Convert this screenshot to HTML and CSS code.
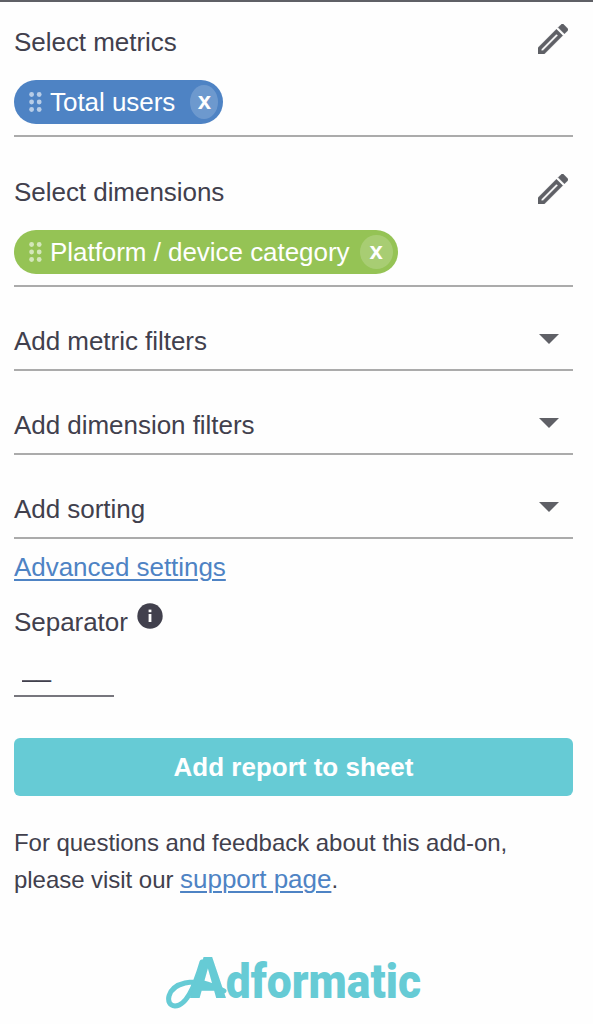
FILE: index.html
```
<!DOCTYPE html>
<html lang="en">
<head>
    <meta charset="utf-8">
    <title>Adformatic</title>
    <link rel="stylesheet" href="styles.css">
</head>
<body>
    <div class="sidebar">
        <div class="picker">
            <div class="picker-heading">
                <span>Select metrics</span>
                <svg class="edit-icon" viewBox="3 3 18 18">
                    <path d="M14.06 9.02l.92.92L5.92 19H5v-.92l9.06-9.06M17.66 3c-.25 0-.51.1-.7.29l-1.83 1.83 3.75 3.75 1.83-1.83c.39-.39.39-1.02 0-1.41l-2.34-2.34c-.2-.2-.45-.29-.71-.29zm-3.6 3.19L3 17.25V21h3.75L17.81 9.94l-3.75-3.75z"/>
                </svg>
            </div>
            <div class="chip chip-metric">
                <svg class="grip" viewBox="0 0 13 20">
                    <circle cx="2.6" cy="2.5" r="2.4"/><circle cx="10.2" cy="2.5" r="2.4"/>
                    <circle cx="2.6" cy="10" r="2.4"/><circle cx="10.2" cy="10" r="2.4"/>
                    <circle cx="2.6" cy="17.5" r="2.4"/><circle cx="10.2" cy="17.5" r="2.4"/>
                </svg>
                <span class="chip-label">Total users</span>
                <span class="chip-close">x</span>
            </div>
        </div>

        <div class="picker">
            <div class="picker-heading">
                <span>Select dimensions</span>
                <svg class="edit-icon" viewBox="3 3 18 18">
                    <path d="M14.06 9.02l.92.92L5.92 19H5v-.92l9.06-9.06M17.66 3c-.25 0-.51.1-.7.29l-1.83 1.83 3.75 3.75 1.83-1.83c.39-.39.39-1.02 0-1.41l-2.34-2.34c-.2-.2-.45-.29-.71-.29zm-3.6 3.19L3 17.25V21h3.75L17.81 9.94l-3.75-3.75z"/>
                </svg>
            </div>
            <div class="chip chip-dimension">
                <svg class="grip" viewBox="0 0 13 20">
                    <circle cx="2.6" cy="2.5" r="2.4"/><circle cx="10.2" cy="2.5" r="2.4"/>
                    <circle cx="2.6" cy="10" r="2.4"/><circle cx="10.2" cy="10" r="2.4"/>
                    <circle cx="2.6" cy="17.5" r="2.4"/><circle cx="10.2" cy="17.5" r="2.4"/>
                </svg>
                <span class="chip-label">Platform / device category</span>
                <span class="chip-close">x</span>
            </div>
        </div>

        <div class="dropdown"><span>Add metric filters</span><span class="arrow"></span></div>
        <div class="dropdown"><span>Add dimension filters</span><span class="arrow"></span></div>
        <div class="dropdown"><span>Add sorting</span><span class="arrow"></span></div>

        <a class="link advanced" href="#">Advanced settings</a>

        <div class="separator">
            <label for="separator">Separator</label>
            <svg class="info-icon" viewBox="0 0 26 26">
                <circle class="info-disc" cx="13" cy="13" r="12.7"/>
                <rect x="11.6" y="6.6" width="2.8" height="2.6"/>
                <rect x="11.6" y="11" width="2.8" height="8"/>
            </svg>
        </div>
        <input class="separator-input" id="separator" type="text" value="__">

        <button class="submit">Add report to sheet</button>

        <p class="support">For questions and feedback about this add-on,<br>please visit our <a class="link support-link" href="#">support page</a>.</p>

        <svg class="logo" viewBox="0 0 256 70">
            <!-- swash leading into the wordmark -->
            <path class="swash" d="M36 14C31 31 22 58 9 58C-2 57 1 39 19 35C32 32 42 35 58 43"/>
            <text class="logo-text" x="24" y="50" textLength="231" lengthAdjust="spacingAndGlyphs"><tspan class="logo-initial">A</tspan>dformatic</text>
        </svg>
    </div>
</body>
</html>
```
FILE: styles.css
```
* {
    box-sizing: border-box;
}

body {
    margin: 0;
    background-color: #fefefe;
    color: #41404d;
    font-family: "Liberation Sans", Arial, sans-serif;
    font-size: 26px;
    letter-spacing: -0.04px;
    line-height: 30px;
}

.sidebar {
    display: flex;
    flex-direction: column;
    align-items: flex-start;
    height: 1024px;
    padding: 0 20px 0 14px;
    border-top: 2px solid #5f6066;
}

.picker {
    width: 100%;
    height: 150px;
    padding-top: 40px;
    border-bottom: 2px solid #ababab;
}

.picker:first-child {
    height: 135px;
    padding-top: 25px;
}

.picker-heading {
    display: flex;
    justify-content: space-between;
    height: 30px;
    padding-right: 5px;
}

.edit-icon {
    width: 30px;
    height: 30px;
    margin-top: -3px;
    fill: #5f6066;
    stroke: #5f6066;
    stroke-width: 0.3;
}

.chip {
    display: inline-flex;
    align-items: center;
    height: 44px;
    margin-top: 23px;
    padding: 0 5px 0 15px;
    border-radius: 22px;
    color: white;
}

.chip-metric {
    background-color: #4e83c4;
}

.chip-dimension {
    background-color: #95c355;
}

.grip {
    width: 13px;
    height: 20px;
    margin-right: 8px;
    fill: rgba(255, 255, 255, 0.6);
}

.chip-close {
    width: 28px;
    height: 34px;
    margin-left: 15px;
    border-radius: 50%;
    background-color: rgba(255, 255, 255, 0.18);
    font-size: 24px;
    font-weight: bold;
    line-height: 31px;
    text-align: center;
}

.chip-dimension .chip-close {
    width: 33px;
    margin-left: 10px;
}

.dropdown {
    display: flex;
    justify-content: space-between;
    width: 100%;
    height: 84px;
    padding: 39px 14px 0 0;
    border-bottom: 2px solid #ababab;
}

.arrow {
    width: 20px;
    height: 10px;
    margin-top: 8px;
    background-color: #5f6066;
    clip-path: polygon(0 0, 100% 0, 50% 100%);
}

.link {
    color: #4e83c4;
    text-decoration: underline;
    text-decoration-thickness: 2px;
    text-underline-offset: 3px;
}

.advanced {
    margin-top: 13px;
}

.separator {
    display: flex;
    margin-top: 25px;
}

.info-icon {
    width: 26px;
    height: 26px;
    margin: -4px 0 0 9px;
    fill: white;
}

.info-disc {
    fill: #41404d;
}

.separator-input {
    width: 100px;
    height: 45px;
    margin-top: 15px;
    padding: 0 8px 11px;
    border: none;
    border-bottom: 2px solid #77767d;
    background: none;
    color: #41404d;
    font: inherit;
}

.submit {
    width: 100%;
    height: 58px;
    margin-top: 41px;
    border: none;
    border-radius: 6px;
    background-color: #66cbd5;
    color: white;
    font: inherit;
    font-weight: bold;
}

.support {
    margin: 28px 0 0;
    font-size: 24px;
    line-height: 37px;
}

.support-link {
    font-size: 26px;
}

.logo {
    width: 256px;
    height: 70px;
    margin: 50px 0 0 152px;
    overflow: visible;
    fill: #66cbd5;
    font-family: Roboto, sans-serif;
    font-weight: 900;
    letter-spacing: 0;
}

.logo-text {
    font-size: 49px;
}

.logo-initial {
    font-size: 58px;
}

.swash {
    fill: none;
    stroke: #66cbd5;
    stroke-width: 5;
    stroke-linecap: round;
}
```
